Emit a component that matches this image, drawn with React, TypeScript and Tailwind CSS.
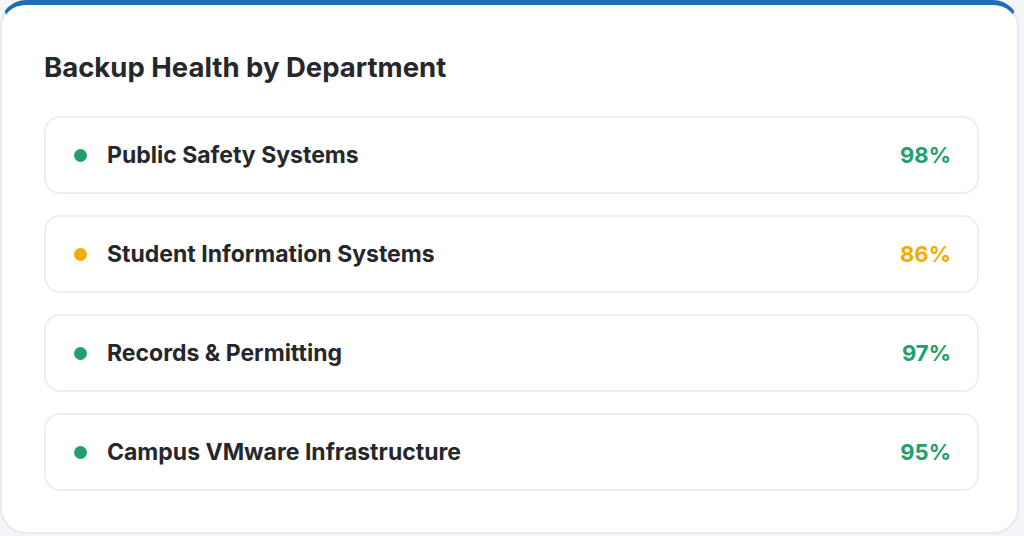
const departments = [
  { name: "Public Safety Systems", value: "98%", tone: "good" },
  { name: "Student Information Systems", value: "86%", tone: "warn" },
  { name: "Records & Permitting", value: "97%", tone: "good" },
  { name: "Campus VMware Infrastructure", value: "95%", tone: "good" },
];

export default function App() {
  return (
    <main
      className="h-[536px] w-[1024px] overflow-hidden bg-[#f4f5f8]"
      style={{ fontFamily: "Inter, 'Open Sans', sans-serif" }}
    >
      <section className="h-[534px] w-[1019px] rounded-[26px] border-2 border-t-[5px] border-[#e7e9ee] border-t-[#1f6dba] bg-white pl-[42px] pr-[38px] pt-[44px]">
        <h2 className="text-[27.5px] font-bold leading-[36px] text-[#25272b]">
          Backup Health by Department
        </h2>

        <div className="mt-[31px] flex flex-col gap-[21px]">
          {departments.map((dept) => (
            <div
              key={dept.name}
              className="flex h-[78px] items-center rounded-[16px] border-2 border-[#eceef2] pl-[28px] pr-[26px]"
            >
              <span
                className={
                  dept.tone === "good"
                    ? "h-[13px] w-[13px] shrink-0 rounded-full bg-[#22a06b]"
                    : "h-[13px] w-[13px] shrink-0 rounded-full bg-[#f2ab00]"
                }
              />
              <span className="ml-[20px] flex-1 text-[23px] font-bold text-[#25272b]">
                {dept.name}
              </span>
              <span
                className={
                  dept.tone === "good"
                    ? "text-[22px] font-bold text-[#22a06b]"
                    : "text-[22px] font-bold text-[#f2ab00]"
                }
              >
                {dept.value}
              </span>
            </div>
          ))}
        </div>
      </section>
    </main>
  );
}
